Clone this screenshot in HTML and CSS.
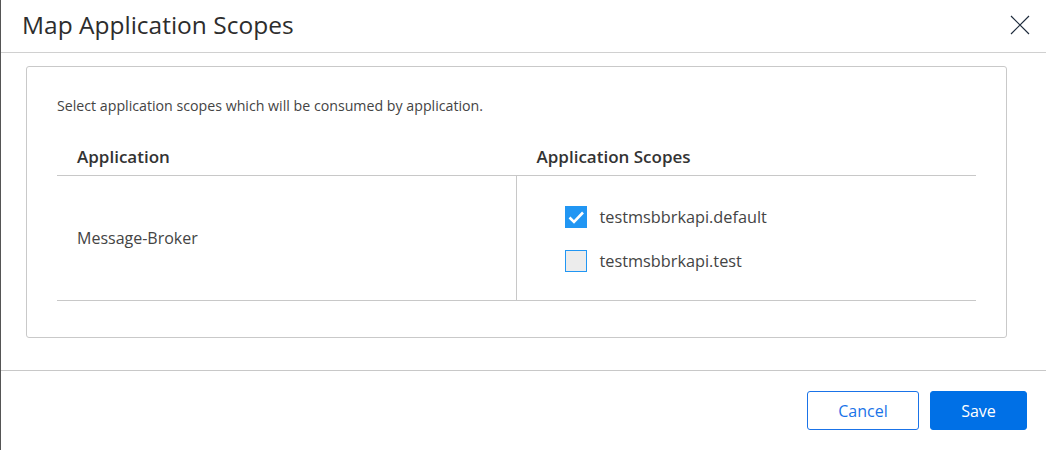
FILE: index.html
```html
<!DOCTYPE html>
<html>
<head>
<meta charset="utf-8">
<link rel="stylesheet" href="styles.css">
</head>
<body>
<div class="dialog">
  <header class="dlg-header">
    <h1 class="dlg-title">Map Application Scopes</h1>
    <button class="dlg-close" aria-label="Close">
      <svg width="20" height="20" viewBox="0 0 20 20"><path d="M1 1 L19 19 M19 1 L1 19" stroke="#1e2b3c" stroke-width="1.2" fill="none"/></svg>
    </button>
  </header>
  <main class="dlg-body">
    <section class="card">
      <p class="desc">Select application scopes which will be consumed by application.</p>
      <div class="table">
        <div class="th">Application</div>
        <div class="th">Application Scopes</div>
        <div class="td td-app">Message-Broker</div>
        <div class="td td-scopes">
          <label class="scope"><span class="box checked"><svg width="22" height="22" viewBox="0 0 22 22"><path d="M4.5 11.5 L9 16 L18 6.5" stroke="#fff" stroke-width="2.6" fill="none"/></svg></span>testmsbbrkapi.default</label>
          <label class="scope"><span class="box"></span>testmsbbrkapi.test</label>
        </div>
      </div>
    </section>
  </main>
  <footer class="dlg-footer">
    <button class="btn btn-secondary">Cancel</button>
    <button class="btn btn-primary">Save</button>
  </footer>
</div>
</body>
</html>
```
FILE: styles.css
```css
html, body {
  margin: 0;
  padding: 0;
  background: #fff;
}
body {
  font-family: "Open Sans", "Noto Sans", sans-serif;
  color: #333;
}
.dialog {
  width: 1046px;
  height: 450px;
  box-sizing: border-box;
  border-left: 1px solid #555;
  display: flex;
  flex-direction: column;
}
.dlg-header {
  height: 53px;
  flex: none;
  box-sizing: border-box;
  border-bottom: 1px solid #d0d0d0;
  display: flex;
  align-items: center;
  justify-content: space-between;
  padding: 0 16px 0 21px;
}
.dlg-title {
  margin: 0;
  font-size: 24.5px;
  font-weight: 400;
  color: #2d2d2d;
  line-height: 32px;
  position: relative;
  top: -1px;
}
.dlg-close {
  background: none;
  border: 0;
  padding: 0;
  width: 20px;
  height: 20px;
  display: flex;
  position: relative;
  top: -1px;
}
.dlg-body {
  flex: none;
  padding: 13px 39px 0 25px;
  height: 318px;
  box-sizing: border-box;
  border-bottom: 1px solid #c8c8c8;
}
.card {
  border: 1px solid #c9c9c9;
  border-radius: 3px;
  padding: 29px 30px 36px;
}
.desc {
  margin: 0 0 19px;
  font-size: 14.2px;
  line-height: 20px;
  color: #444;
}
.table {
  display: grid;
  grid-template-columns: 1fr 1fr;
}
.th {
  box-sizing: border-box;
  padding-top: 2px;
  display: flex;
  align-items: center;
  padding-left: 20px;
  font-size: 17px;
  font-weight: 600;
  color: #333;
  border-bottom: 1px solid #c8c8c8;
  height: 41px;
}
.td {
  height: 125px;
  box-sizing: border-box;
  border-bottom: 1px solid #c8c8c8;
  display: flex;
  font-size: 16px;
  color: #444;
}
.td-app {
  align-items: center;
  padding-left: 20px;
  border-right: 1px solid #c8c8c8;
}
.td-scopes {
  flex-direction: column;
  justify-content: center;
  gap: 22px;
  padding-left: 48px;
  padding-top: 2px;
  font-size: 16.3px;
}
.scope {
  display: flex;
  align-items: center;
  gap: 13px;
  height: 22px;
}
.box {
  width: 22px;
  height: 22px;
  box-sizing: border-box;
  border: 1px solid #2196f3;
  background: #ececec;
  display: flex;
}
.box.checked {
  background: #2196f3;
  border: 0;
}
.dlg-footer {
  flex: 1;
  display: flex;
  justify-content: flex-end;
  align-items: flex-start;
  gap: 11px;
  padding: 20px 19px 0 0;
}
.btn {
  height: 39px;
  border-radius: 3px;
  font-family: "Open Sans", "Noto Sans", sans-serif;
  font-size: 16px;
  cursor: pointer;
}
.btn-secondary {
  width: 112px;
  background: #fff;
  color: #1a73e8;
  border: 1px solid #1a73e8;
}
.btn-primary {
  width: 97px;
  background: #0070e6;
  color: #fff;
  border: 1px solid #0070e6;
}
```
